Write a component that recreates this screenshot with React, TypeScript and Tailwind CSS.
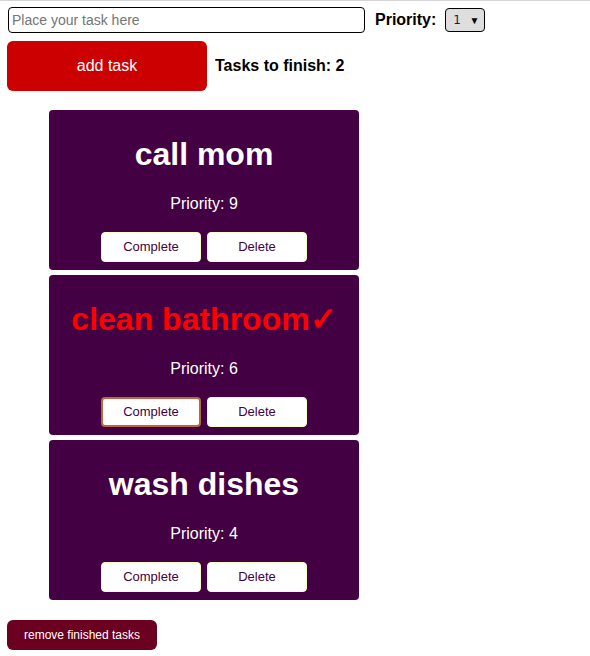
const tasks = [
  { name: "call mom", priority: 9, done: false },
  { name: "clean bathroom", priority: 6, done: true },
  { name: "wash dishes", priority: 4, done: false },
]

const TaskCard = ({ name, priority, done }: { name: string; priority: number; done: boolean }) => {
  return (
    <div className="w-[310px] h-[160px] bg-[#430042] rounded-[4px] pt-[26px] flex flex-col items-center">
      <h2 className={"text-[32px] font-bold leading-[37px] " + (done ? "text-[#ff0000]" : "text-white")}>
        {name}
        {done ? "✓" : ""}
      </h2>
      <p className="mt-[22px] text-[16px] leading-[18px] text-white">Priority: {priority}</p>
      <div className="mt-[19px] flex gap-[6px]">
        <button
          className={
            "w-[100px] h-[30px] bg-white rounded-[4px] text-[13px] text-[#440044] " +
            (done ? "border-2 border-[#b8683a]" : "border border-[#f2ffc8]")
          }
        >
          Complete
        </button>
        <button className="w-[100px] h-[30px] bg-white rounded-[4px] border border-[#f2ffc8] text-[13px] text-[#440044]">
          Delete
        </button>
      </div>
    </div>
  )
}

const App = () => {
  return (
    <div className="min-h-[656px] bg-white border-t border-[#d4d4d4] font-['Liberation_Sans',Arial,sans-serif]">
      <div className="flex items-center pl-[8px] pt-[6px]">
        <input
          type="text"
          placeholder="Place your task here"
          className="w-[357px] h-[26px] px-[3px] text-[14px] border border-black rounded-[4px] placeholder-[#757575] outline-none"
        />
        <span className="ml-[10px] text-[16px] font-bold text-black">Priority:</span>
        <div className="ml-[9px] w-[40px] h-[24px] bg-[#dedede] border border-black rounded-[4px] flex items-center justify-between pl-[7px] pr-[5px]">
          <span className="text-[#1a1a4a] font-['DejaVu_Sans',sans-serif] text-[12px]">1</span>
          <span className="text-[10px] text-black">▼</span>
        </div>
      </div>

      <div className="flex items-center mt-[8px] pl-[7px]">
        <button className="w-[200px] h-[50px] bg-[#cc0000] rounded-[6px] text-white text-[16px]">add task</button>
        <span className="ml-[8px] text-[16px] font-bold text-black">Tasks to finish: 2</span>
      </div>

      <div className="mt-[19px] ml-[49px] flex flex-col gap-[5px]">
        {tasks.map((t) => (
          <TaskCard key={t.name} {...t} />
        ))}
      </div>

      <div className="pl-[7px] mt-[20px]">
        <button className="w-[150px] h-[30px] bg-[#6b0020] rounded-[6px] text-white text-[12px]">
          remove finished tasks
        </button>
      </div>
    </div>
  )
}

export default App
